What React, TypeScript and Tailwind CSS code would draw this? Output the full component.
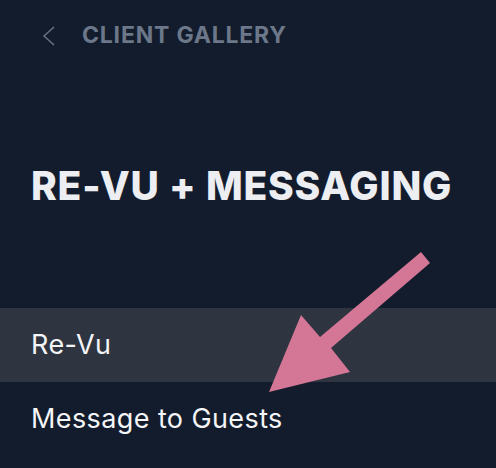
const font = { fontFamily: "Inter, 'Noto Sans', sans-serif" };

function NavItem({ label, active }: { label: string; active?: boolean }) {
  return (
    <div className={`flex h-[74px] items-center px-[31px] ${active ? "bg-[#2e3440]" : ""}`}>
      <span className="text-[27px] font-normal tracking-[0.4px] text-[#f4f5f7]">{label}</span>
    </div>
  );
}

export default function App() {
  return (
    <div className="relative h-[468px] w-[496px] overflow-hidden bg-[#131c2c]" style={font}>
      <div className="flex h-[70px] items-center pl-[42px] pt-px">
        <svg width="14" height="20" viewBox="0 0 14 20" fill="none">
          <polyline points="12,1 2,10 12,19" stroke="#6b7586" strokeWidth="1.4" />
        </svg>
        <span className="ml-[26px] text-[23px] font-bold tracking-[0.8px] text-[#6c788a]">CLIENT GALLERY</span>
      </div>
      <div className="flex h-[238px] items-start pl-[31px] pt-[93px]">
        <h1 className="text-[39px] font-extrabold leading-[1.2] tracking-[0.8px] text-[#eceef1]">RE-VU + MESSAGING</h1>
      </div>
      <NavItem label="Re-Vu" active />
      <NavItem label="Message to Guests" />
      <svg className="pointer-events-none absolute inset-0" width="496" height="468" viewBox="0 0 496 468">
        <polygon
          points="269,392 301,315 320,337 421,252 430,263 331,348 350,372"
          fill="#d47696"
        />
      </svg>
    </div>
  );
}
